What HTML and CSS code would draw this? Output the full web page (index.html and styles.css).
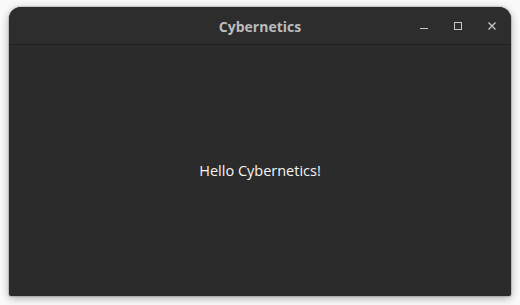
FILE: index.html
```html
<!DOCTYPE html>
<html>
<head>
<meta charset="utf-8">
<link rel="stylesheet" href="styles.css">
</head>
<body>
<div class="window">
  <header class="titlebar">
    <div class="title">Cybernetics</div>
    <div class="controls">
      <span class="btn"><svg width="8" height="8" viewBox="0 0 8 8"><rect x="0" y="6" width="8" height="1" fill="#c8c8c8"/></svg></span>
      <span class="btn"><svg width="8" height="8" viewBox="0 0 8 8"><rect x="0.5" y="0.5" width="7" height="7" fill="none" stroke="#c8c8c8" stroke-width="1"/></svg></span>
      <span class="btn"><svg width="8" height="8" viewBox="0 0 8 8"><path d="M0.5 0.5 L7.5 7.5 M7.5 0.5 L0.5 7.5" stroke="#c8c8c8" stroke-width="1.3" fill="none"/></svg></span>
    </div>
  </header>
  <main class="content">
    <p class="hello">Hello Cybernetics!</p>
  </main>
</div>
</body>
</html>
```
FILE: styles.css
```css
html, body {
  margin: 0;
  padding: 0;
}
body {
  width: 520px;
  height: 305px;
  background: #fafafa;
  padding: 7px 9px 9px 9px;
  box-sizing: border-box;
  overflow: hidden;
  font-family: "Open Sans", "Noto Sans", sans-serif;
}
.window {
  width: 502px;
  height: 289px;
  background: #2b2b2b;
  border-radius: 12px 12px 2px 2px;
  box-shadow: 0 2px 9px rgba(0, 0, 0, 0.35), 0 0 0 1px rgba(0, 0, 0, 0.12);
  display: flex;
  flex-direction: column;
  overflow: hidden;
}
.titlebar {
  height: 37px;
  flex: none;
  border-bottom: 1px solid #1e1e1e;
  background: #2d2d2d;
  display: flex;
  align-items: center;
  justify-content: center;
  position: relative;
}
.title {
  color: #bcbcbc;
  font-weight: 700;
  font-size: 14px;
  letter-spacing: 0;
  margin-top: 2px;
}
.controls {
  position: absolute;
  right: 15px;
  top: 15px;
  display: flex;
  gap: 26px;
}
.btn {
  width: 8px;
  height: 8px;
  display: block;
}
.btn svg {
  display: block;
}
.content {
  flex: 1;
  display: flex;
  align-items: center;
  justify-content: center;
  padding-bottom: 1px;
}
.hello {
  margin: 0;
  color: #f4f4f4;
  font-size: 14.5px;
  margin-top: 1px;
}
```
